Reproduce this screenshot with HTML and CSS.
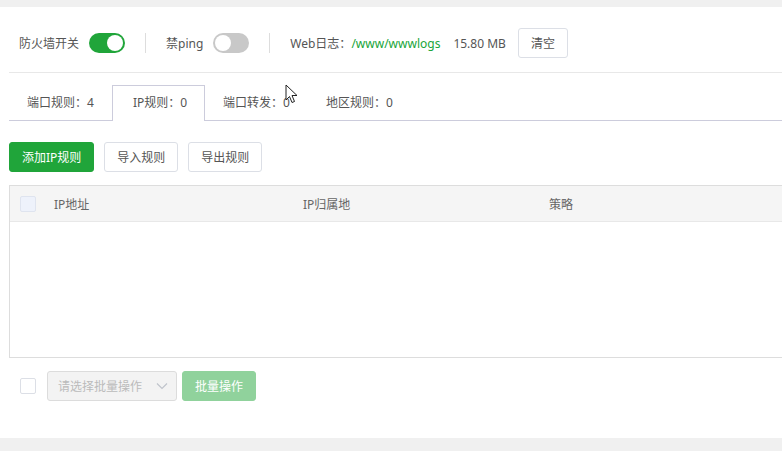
FILE: index.html
```html
<!DOCTYPE html>
<html lang="zh-CN">
<head>
  <meta charset="UTF-8" />
  <title>系统防火墙</title>
  <link rel="stylesheet" href="styles.css">
</head>
<body>

  <div class="card">
    <div class="toolbar">
      <span class="label">防火墙开关</span>
      <span class="switch on"></span>
      <span class="sep"></span>
      <span class="label">禁ping</span>
      <span class="switch"></span>
      <span class="sep"></span>
      <span class="label">Web日志：<span class="path">/www/wwwlogs</span></span>
      <span class="size">15.80 MB</span>
      <button class="btn">清空</button>
    </div>

    <div class="tabs">
      <div class="tab">端口规则：4</div>
      <div class="tab active">IP规则：0</div>
      <div class="tab">端口转发：0</div>
      <div class="tab">地区规则：0</div>
    </div>

    <div class="actions">
      <button class="btn primary">添加IP规则</button>
      <button class="btn">导入规则</button>
      <button class="btn">导出规则</button>
    </div>

    <div class="table">
      <div class="thead">
        <span class="check head"></span>
        <span class="col c1">IP地址</span>
        <span class="col c2">IP归属地</span>
        <span class="col c3">策略</span>
      </div>
      <div class="tbody"></div>
    </div>

    <div class="batch">
      <span class="check"></span>
      <div class="select">
        <span>请选择批量操作</span>
        <svg width="12" height="8" viewBox="0 0 12 8"><path d="M1 1.5 L6 6.5 L11 1.5" fill="none" stroke="#c0c4cc" stroke-width="1.2"/></svg>
      </div>
      <button class="btn primary disabled">批量操作</button>
    </div>

    <svg class="cursor" width="14" height="21" viewBox="0 0 14 21">
      <path d="M1 1 L1 16 L4.5 12.5 L7 18.5 L9.5 17.5 L7 11.5 L12 11.5 Z" fill="#fff" stroke="#222" stroke-width="1"/>
    </svg>
  </div>

</body>
</html>
```

FILE: styles.css
```css
body {
  margin: 0;
  padding-top: 7px;
  background: #f0f0f0;
  font-family: "Noto Sans", "Noto Sans CJK SC", sans-serif;
  font-size: 12px;
  color: #555;
  overflow: hidden;
}
.card {
  position: relative;
  background: #fff;
  height: 431px;
  padding-left: 9px;
  box-sizing: border-box;
}
.toolbar {
  display: flex;
  align-items: center;
  padding: 21px 0 14px 10px;
  border-bottom: 1px solid #e8e8e8;
}
.label {
  margin-right: 10px;
}
.path {
  color: #20a53a;
}
.size {
  margin: 0 12px 0 3px;
}
.switch {
  position: relative;
  width: 36px;
  height: 20px;
  border-radius: 10px;
  background: #c8c8c8;
  margin-right: 20px;
}
.switch::after {
  content: "";
  position: absolute;
  top: 2px;
  left: 2px;
  width: 16px;
  height: 16px;
  border-radius: 50%;
  background: #fff;
}
.switch.on {
  background: #20a53a;
}
.switch.on::after {
  left: 18px;
}
.sep {
  width: 1px;
  height: 20px;
  background: #ddd;
  margin-right: 20px;
}
.btn {
  height: 30px;
  padding: 0 12px;
  font-family: inherit;
  font-size: 12px;
  color: #555;
  background: #fff;
  border: 1px solid #dcdfe6;
  border-radius: 3px;
}
.btn.primary {
  color: #fff;
  background: #20a53a;
  border-color: #20a53a;
}
.btn.disabled {
  background: #90d29c;
  border-color: #90d29c;
}
.tabs {
  display: flex;
  margin-top: 12px;
  border-bottom: 1px solid #ccccdc;
}
.tab {
  height: 34px;
  line-height: 34px;
  padding: 0 17px;
  border: 1px solid transparent;
  border-bottom: none;
  margin-bottom: -1px;
}
.tab.active {
  border-color: #ccccdc;
  background: #fff;
  height: 35px;
  padding: 0 17px 0 20px;
}
.actions {
  display: flex;
  gap: 10px;
  margin-top: 21px;
}
.table {
  margin-top: 13px;
  border: 1px solid #ddd;
  border-right: none;
}
.thead {
  display: flex;
  align-items: center;
  height: 35px;
  background: #f5f5f5;
  border-bottom: 1px solid #e8e8e8;
  padding-left: 10px;
}
.check {
  width: 14px;
  height: 14px;
  border: 1px solid #dcdfe6;
  border-radius: 2px;
  background: #fff;
}
.check.head {
  background: #eef2fb;
  border-color: #dfe4ef;
}
.col {
  color: #666;
}
.c1 {
  margin-left: 18px;
  width: 249px;
}
.c2 {
  width: 246px;
}
.tbody {
  height: 135px;
}
.batch {
  display: flex;
  align-items: center;
  margin-top: 13px;
  padding-left: 11px;
}
.select {
  display: flex;
  align-items: center;
  justify-content: space-between;
  box-sizing: border-box;
  width: 130px;
  height: 30px;
  margin: 0 5px 0 11px;
  padding: 0 8px 0 10px;
  background: #f3f3f3;
  border: 1px solid #dcdcdc;
  border-radius: 3px;
  color: #bbb;
}
.cursor {
  position: absolute;
  left: 285px;
  top: 77px;
}
```
